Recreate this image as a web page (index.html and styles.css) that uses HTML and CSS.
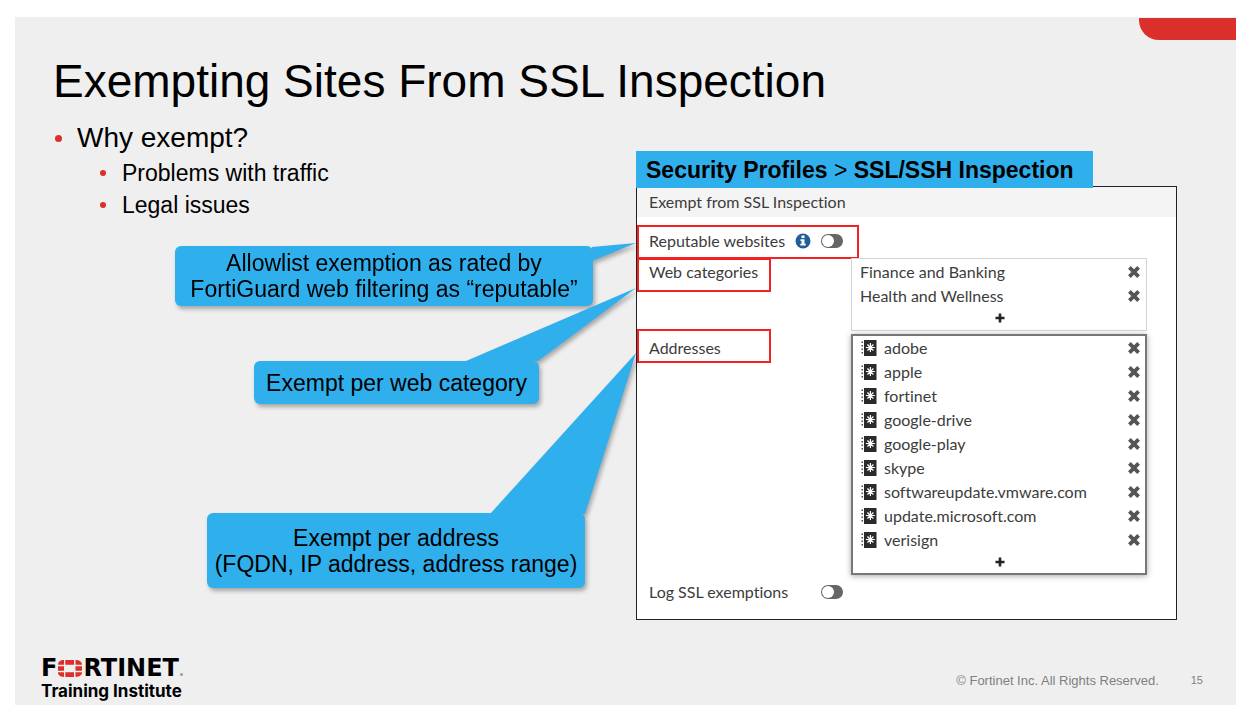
FILE: index.html
```html
<!DOCTYPE html>
<html lang="en">
<head>
<meta charset="utf-8">
<title>Exempting Sites From SSL Inspection</title>
<link rel="stylesheet" href="styles.css">
</head>
<body>
<svg class="defs" aria-hidden="true">
  <symbol id="book" viewBox="0 0 16 16">
    <path fill="#2b2b2d" d="M3 0h12.500v16H3z"/>
    <path fill="#4a4a4a" d="M0.500 1.500H2V3H0.500zM0.500 5H2v1.500H0.500zM0.500 8.500H2V10H0.500zM0.500 12H2v1.500H0.500z"/>
    <path fill="none" stroke="#fff" stroke-width="1.200" d="M9.400 3v9M4.900 7.500h9M6.400 4.500l6 6M12.400 4.500l-6 6"/>
  </symbol>
  <symbol id="cross" viewBox="0 0 12 12">
    <path fill="none" stroke="#555" stroke-width="3.800" d="M1.400 1.400l9.200 9.200M10.600 1.400l-9.200 9.200"/>
  </symbol>
  <symbol id="plus" viewBox="0 0 10 10">
    <path fill="none" stroke="#222" stroke-width="2.600" d="M5 0.500v9M0.500 5h9"/>
  </symbol>
</svg>
<div class="slide">
  <header class="slide-header"><h1>Exempting Sites From SSL Inspection</h1></header>
  <div class="corner"></div>
  <main class="content">
    <section class="notes">
      <ul class="points">
        <li>Why exempt?
          <ul class="subpoints">
            <li>Problems with traffic</li>
            <li>Legal issues</li>
          </ul>
        </li>
      </ul>
      <div class="callout callout-reputable">
        <svg class="tail" width="45" height="22" viewBox="0 0 45 22" aria-hidden="true"><path d="M0 5L44 1L0 19z"/></svg>
        <p>Allowlist exemption as rated by<br>FortiGuard web filtering as “reputable”</p>
      </div>
      <div class="callout callout-category">
        <svg class="tail" width="172" height="74" viewBox="0 0 172 74" aria-hidden="true"><path d="M0 73L170 0L72 73z"/></svg>
        <p>Exempt per web category</p>
      </div>
      <div class="callout callout-address">
        <svg class="tail" width="148" height="162" viewBox="0 0 148 162" aria-hidden="true"><path d="M0 161L146 0L95 161z"/></svg>
        <p>Exempt per address<br>(FQDN, IP address, address range)</p>
      </div>
    </section>
    <section class="demo">
      <h2 class="path">Security Profiles <span>&gt;</span> SSL/SSH Inspection</h2>
      <form class="panel">
        <h3>Exempt from SSL Inspection</h3>
        <div class="marked marked-wide">
          <label for="reputable">Reputable websites</label>
          <svg class="info" viewBox="0 0 16 16" role="img" aria-label="Info"><circle cx="8" cy="8" r="7.500" fill="#205f99"/><path fill="#fff" d="M6.500 2.500h3v2.500h-3zM5.500 6.300h4v4.500h1.200v1.700H5.300v-1.700h1.200V8H5.500z"/></svg>
          <input class="toggle" type="checkbox" id="reputable">
        </div>
        <div class="field field-categories">
          <span class="marked" id="categories">Web categories</span>
          <div class="picker" role="group" aria-labelledby="categories">
            <ul>
              <li><span>Finance and Banking</span><button type="button" aria-label="Remove Finance and Banking"><svg><use href="#cross"/></svg></button></li>
              <li><span>Health and Wellness</span><button type="button" aria-label="Remove Health and Wellness"><svg><use href="#cross"/></svg></button></li>
            </ul>
            <button class="add" type="button" aria-label="Add category"><svg><use href="#plus"/></svg></button>
          </div>
        </div>
        <div class="field field-addresses">
          <span class="marked" id="addresses">Addresses</span>
          <div class="picker picker-active" role="group" aria-labelledby="addresses">
            <ul>
              <li><svg class="book"><use href="#book"/></svg><span>adobe</span><button type="button" aria-label="Remove adobe"><svg><use href="#cross"/></svg></button></li>
              <li><svg class="book"><use href="#book"/></svg><span>apple</span><button type="button" aria-label="Remove apple"><svg><use href="#cross"/></svg></button></li>
              <li><svg class="book"><use href="#book"/></svg><span>fortinet</span><button type="button" aria-label="Remove fortinet"><svg><use href="#cross"/></svg></button></li>
              <li><svg class="book"><use href="#book"/></svg><span>google-drive</span><button type="button" aria-label="Remove google-drive"><svg><use href="#cross"/></svg></button></li>
              <li><svg class="book"><use href="#book"/></svg><span>google-play</span><button type="button" aria-label="Remove google-play"><svg><use href="#cross"/></svg></button></li>
              <li><svg class="book"><use href="#book"/></svg><span>skype</span><button type="button" aria-label="Remove skype"><svg><use href="#cross"/></svg></button></li>
              <li><svg class="book"><use href="#book"/></svg><span>softwareupdate.vmware.com</span><button type="button" aria-label="Remove softwareupdate.vmware.com"><svg><use href="#cross"/></svg></button></li>
              <li><svg class="book"><use href="#book"/></svg><span>update.microsoft.com</span><button type="button" aria-label="Remove update.microsoft.com"><svg><use href="#cross"/></svg></button></li>
              <li><svg class="book"><use href="#book"/></svg><span>verisign</span><button type="button" aria-label="Remove verisign"><svg><use href="#cross"/></svg></button></li>
            </ul>
            <button class="add" type="button" aria-label="Add address"><svg><use href="#plus"/></svg></button>
          </div>
        </div>
        <div class="log">
          <label for="log">Log SSL exemptions</label>
          <input class="toggle" type="checkbox" id="log">
        </div>
      </form>
    </section>
  </main>
  <footer class="slide-footer">
    <div class="brand">
      <div class="wordmark"><span>F</span><svg viewBox="0 0 24 17" role="img" aria-label="O"><path fill="#da2f2a" d="M7.300 0h8.700v4.700H7.300zM7.300 12.300h8.700V17H7.300zM0 6.200h6v4.600H0zM17.500 6.200h6.500v4.600h-6.500zM6 0v4.700H0C0 2 2 0 6 0zM17.500 0c4 0 6.500 2 6.500 4.700h-6.500zM0 12.300h6V17c-4 0-6-2-6-4.700zM17.500 12.300H24c0 2.700-2.500 4.700-6.500 4.700z"/></svg><span>RTINET</span><i class="mark"></i></div>
      <div class="institute">Training Institute</div>
    </div>
    <div class="legal"><span>© Fortinet Inc. All Rights Reserved.</span><span class="page">15</span></div>
  </footer>
</div>
</body>
</html>
```
FILE: styles.css
```css
* { box-sizing: border-box; }
body {
  margin: 0;
  padding: 17px 2px 17px 15px;
  min-height: 100vh;
  display: flex;
  background: #fff;
  color: #000;
  font-family: "Liberation Sans", Arial, sans-serif;
}
h1, h2, h3, p, ul { margin: 0; padding: 0; font-weight: 400; }
ul { list-style: none; }
button { border: 0; padding: 0; background: none; }
svg { display: block; }
.defs { position: absolute; width: 0; height: 0; }

.slide {
  position: relative;
  flex: 1;
  display: flex;
  flex-direction: column;
  background: #efefef;
}
.corner {
  position: absolute;
  top: 1px;
  right: 0;
  width: 97px;
  height: 22px;
  background: #da2f2a;
  border-bottom-left-radius: 20px;
}
.slide-header { padding: 38px 38px 13px; }
h1 { font-size: 46px; line-height: 52px; }

.content {
  display: grid;
  grid-template-columns: minmax(0, 621fr) minmax(0, 541fr);
  padding-right: 59px;
}
.notes { display: flex; flex-direction: column; align-items: flex-end; }
.points { align-self: stretch; padding-left: 62px; font-size: 28px; line-height: 36px; }
.points li { position: relative; }
.points li::before {
  content: "";
  position: absolute;
  left: -22px;
  top: 15px;
  width: 7px;
  height: 7px;
  border-radius: 50%;
  background: #da2f2a;
}
.subpoints { padding: 1px 0 0 45px; font-size: 23px; line-height: 32px; }
.subpoints li::before { top: 13px; width: 6px; height: 6px; }

.callout {
  position: relative;
  display: flex;
  align-items: center;
  justify-content: center;
  border-radius: 6px;
  background: #30afed;
  font-size: 23px;
  line-height: 26px;
  text-align: center;
  white-space: nowrap;
  filter: drop-shadow(2px 3px 2px rgba(0, 0, 0, 0.3));
}
.tail { position: absolute; bottom: 100%; left: 100%; fill: #30afed; }
.callout-reputable { width: 418px; height: 60px; margin: 25px 43px 0 0; }
.callout-reputable .tail { top: -4px; bottom: auto; left: calc(100% - 1px); }
.callout-category { width: 285px; height: 43px; margin: 55px 97px 0 0; }
.callout-category .tail { left: auto; right: -99px; bottom: calc(100% - 1px); }
.callout-address { width: 378px; height: 75px; margin: 109px 51px 0 0; }
.callout-address .tail { left: auto; right: -53px; bottom: calc(100% - 2px); }

.demo { padding-top: 31px; color: #3c3c3c; }
.path {
  position: relative;
  width: 457px;
  padding: 1px 0 0 10px;
  background: #30afed;
  color: #000;
  font-size: 23px;
  font-weight: 700;
  line-height: 36px;
}
.path span { font-weight: 400; }
.panel {
  margin-top: -2px;
  border: 1px solid #222;
  background: #fff;
  font-family: Lato, sans-serif;
  font-size: 16px;
  font-variant-ligatures: none;
  line-height: 24px;
}
.panel h3 { padding: 3px 12px; background: #f4f4f4; font-size: 16px; }
.marked {
  display: block;
  width: 134px;
  height: 34px;
  padding-left: 10px;
  border: 2px solid #f32121;
}
.marked-wide {
  display: flex;
  align-items: center;
  gap: 10px;
  width: 222px;
  margin-top: 8px;
  padding-bottom: 3px;
}
.info { width: 16px; height: 16px; }
.toggle {
  appearance: none;
  position: relative;
  width: 22px;
  height: 14px;
  margin: 0;
  border-radius: 7px;
  background: #666;
}
.toggle::before {
  content: "";
  position: absolute;
  left: 1px;
  top: 1px;
  width: 12px;
  height: 12px;
  border-radius: 50%;
  background: #fff;
}
.field { display: grid; grid-template-columns: 214px minmax(0, 1fr); padding-right: 29px; }
.field-categories { margin-top: -1px; }
.field-addresses { margin-top: -2px; }
.field-addresses .marked { padding-top: 5px; }
.picker { padding: 1px 6px 2px 8px; border: 1px solid #d4d4d4; }
.picker-active {
  margin-top: 5px;
  padding: 0 5px 1px 7px;
  border: 2px solid #777;
  box-shadow: 0 1px 6px rgba(0, 0, 0, 0.35);
}
.picker li { display: flex; align-items: center; height: 24px; }
.picker li span { flex: 1; }
.picker li button svg { width: 12px; height: 12px; }
.book { width: 16px; height: 16px; margin: 0 7px 0 1px; }
.add { display: block; width: 100%; height: 20px; }
.add svg { width: 10px; height: 10px; margin: auto; }
.log { display: flex; align-items: center; padding: 5px 12px 15px; }
.log label { width: 172px; }

.slide-footer {
  display: flex;
  justify-content: space-between;
  align-items: flex-end;
  margin-top: auto;
  padding: 0 33px 3px 26px;
}
.wordmark {
  display: flex;
  align-items: center;
  gap: 1px;
  font-family: "DejaVu Sans", sans-serif;
  font-size: 24px;
  font-weight: 700;
  line-height: 24px;
}
.wordmark svg { width: 24px; height: 17px; }
.mark { align-self: flex-end; width: 3px; height: 3px; margin-bottom: 4px; border-radius: 50%; background: #999; }
.institute { font-family: Inter, sans-serif; font-size: 17px; font-weight: 700; line-height: 22px; }
.legal {
  display: flex;
  gap: 32px;
  padding-bottom: 13px;
  color: #7f7f7f;
  font-size: 13px;
  line-height: 16px;
}
.page { font-size: 11px; line-height: 14px; }
```
